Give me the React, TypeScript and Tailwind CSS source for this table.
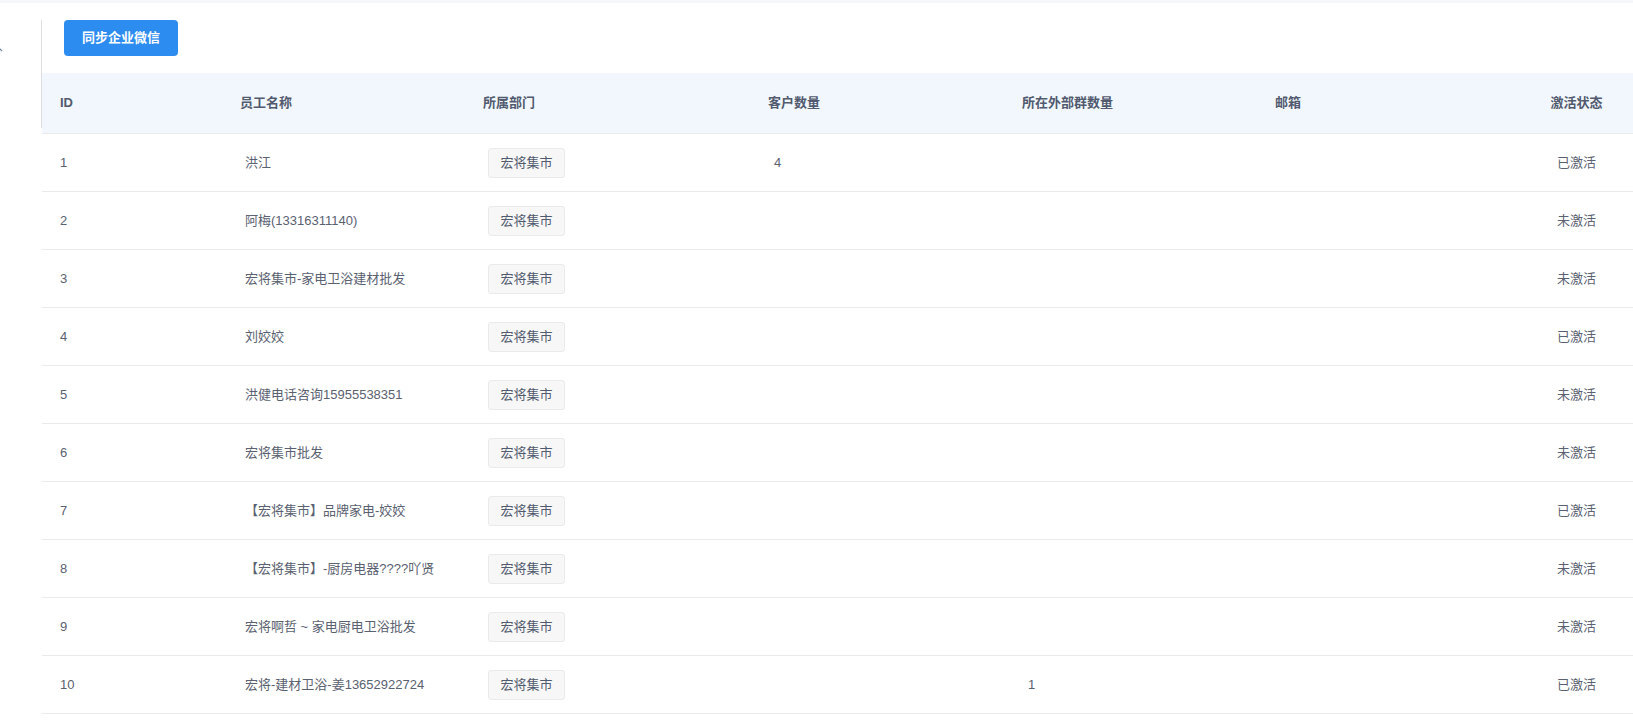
import React from 'react';

type Staff = {
  id: number;
  name: string;
  dept: string;
  customers?: string;
  groups?: string;
  active: boolean;
};

const rows: Staff[] = [
  { id: 1, name: '洪江', dept: '宏将集市', customers: '4', active: true },
  { id: 2, name: '阿梅(13316311140)', dept: '宏将集市', active: false },
  { id: 3, name: '宏将集市-家电卫浴建材批发', dept: '宏将集市', active: false },
  { id: 4, name: '刘姣姣', dept: '宏将集市', active: true },
  { id: 5, name: '洪健电话咨询15955538351', dept: '宏将集市', active: false },
  { id: 6, name: '宏将集市批发', dept: '宏将集市', active: false },
  { id: 7, name: '【宏将集市】品牌家电-姣姣', dept: '宏将集市', active: true },
  { id: 8, name: '【宏将集市】-厨房电器????吖贤', dept: '宏将集市', active: false },
  { id: 9, name: '宏将啊哲 ~ 家电厨电卫浴批发', dept: '宏将集市', active: false },
  { id: 10, name: '宏将-建材卫浴-姜13652922724', dept: '宏将集市', groups: '1', active: true },
];

const cols = 'grid grid-cols-[180px_243px_285px_223px_284px_263px_1fr]';

const App: React.FC = () => {
  return (
    <div
      className="w-full h-[725px] bg-white overflow-hidden text-[13px]"
      style={{ fontFamily: '"Liberation Sans", "Noto Sans CJK SC", sans-serif' }}
    >
      {/* top strip */}
      <div className="h-[3px] bg-[#f5f7f9]" />

      <div className="flex">
        {/* collapsed sidebar */}
        <div className="w-[41px] flex-none relative">
          <svg className="absolute left-[-4px] top-[40px]" width="10" height="10" viewBox="0 0 10 10">
            <path d="M1 3 L6 8" stroke="#6b7a99" strokeWidth="1.2" fill="none" />
          </svg>
        </div>
        <div className="w-px flex-none mt-[17px] h-[108px] bg-[#dcdee2]" />

        {/* content */}
        <div className="flex-1 pt-[17px]">
          <div className="pl-[22px]">
            <button className="h-[36px] w-[114px] rounded-[4px] bg-[#2d8cf0] text-white font-bold text-[13px]">
              同步企业微信
            </button>
          </div>

          <div className="mt-[17px]">
            {/* header */}
            <div className={`${cols} h-[61px] bg-[#f2f7fd] border-b border-[#e8eaec] items-center text-[#515a6e] font-bold`}>
              <div className="pl-[18px]">ID</div>
              <div className="pl-[18px]">员工名称</div>
              <div className="pl-[18px]">所属部门</div>
              <div className="pl-[18px]">客户数量</div>
              <div className="pl-[49px]">所在外部群数量</div>
              <div className="pl-[18px]">邮箱</div>
              <div className="text-center">激活状态</div>
            </div>

            {/* body */}
            {rows.map((r) => (
              <div
                key={r.id}
                className={`${cols} h-[58px] border-b border-[#e8eaec] items-center text-[#5a6170]`}
              >
                <div className="pl-[18px]">{r.id}</div>
                <div className="pl-[23px] whitespace-nowrap">{r.name}</div>
                <div className="pl-[23px]">
                  <span className="inline-flex items-center justify-center h-[30px] w-[77px] rounded-[3px] border border-[#e8eaec] bg-[#f7f7f7] text-[#515a6e]">
                    {r.dept}
                  </span>
                </div>
                <div className="pl-[24px]">{r.customers ?? ''}</div>
                <div className="pl-[55px]">{r.groups ?? ''}</div>
                <div className="pl-[18px]" />
                <div className="text-center">{r.active ? '已激活' : '未激活'}</div>
              </div>
            ))}
          </div>
        </div>
      </div>
    </div>
  );
};

export default App;
